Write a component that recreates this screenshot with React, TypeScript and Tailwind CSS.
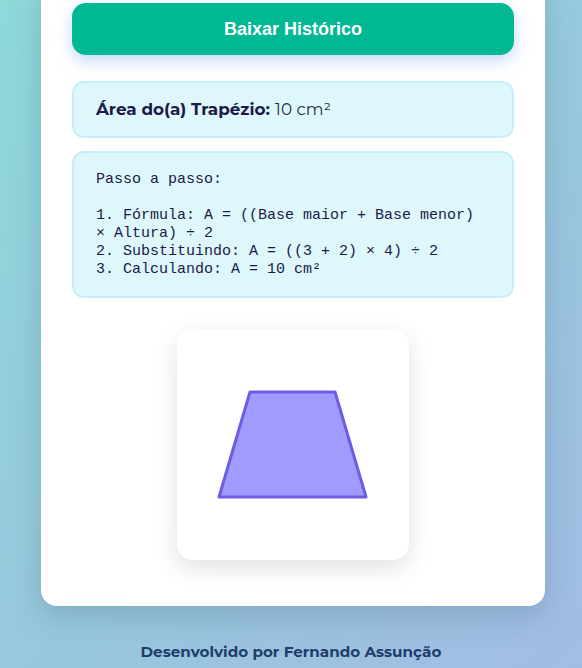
export default function App() {
  const steps = [
    "Passo a passo:",
    "",
    "1. Fórmula: A = ((Base maior + Base menor) × Altura) ÷ 2",
    "2. Substituindo: A = ((3 + 2) × 4) ÷ 2",
    "3. Calculando: A = 10 cm²",
  ].join("\n");

  return (
    <div className="h-[668px] overflow-hidden bg-[linear-gradient(135deg,#8ed9da_0%,#98c6dd_60%,#a3bce4_100%)] font-['Montserrat','Open_Sans',sans-serif]">
      <div className="ml-[41px] -mt-[20px] w-[504px] rounded-2xl bg-white px-[31px] pt-[23px] pb-[46px] shadow-[0_10px_30px_rgba(60,90,120,0.25)]">
        {/* Download */}
        <button
          type="button"
          className="h-[52px] w-full rounded-[14px] bg-[#00b894] font-['Liberation_Sans',sans-serif] text-[18px] font-bold text-white shadow-[0_6px_16px_rgba(90,150,240,0.35)]"
        >
          Baixar Histórico
        </button>

        {/* Result */}
        <div className="mt-[26px] flex h-[57px] items-center rounded-xl border-2 border-[#c4effa] bg-[#def7fa] px-[22px] text-[16.8px] text-[#1c1a4a]">
          <span className="font-bold">Área do(a) Trapézio:</span>
          <span className="ml-[5px] font-normal text-[#2d2d45]">10 cm²</span>
        </div>

        {/* Steps */}
        <div className="mt-[13px] rounded-xl border-2 border-[#c4effa] bg-[#def7fa] px-[22px] pt-[18px] pb-[17px]">
          <pre className="whitespace-pre-wrap font-['Liberation_Mono',monospace] text-[15px] leading-[18px] text-[#1c1a4a]">
            {steps}
          </pre>
        </div>

        {/* Shape */}
        <div className="mt-[31px] flex justify-center">
          <div className="flex h-[231px] w-[232px] items-center justify-center rounded-2xl bg-white shadow-[0_8px_24px_rgba(0,0,0,0.12)]">
            <svg width="232" height="231" viewBox="0 0 232 231">
              <polygon
                points="42,168 73,63 158,63 189,168"
                fill="#a29bfe"
                stroke="#6c5ce7"
                strokeWidth="3"
                strokeLinejoin="round"
              />
            </svg>
          </div>
        </div>
      </div>

      <p className="mt-[35px] text-center text-[15.2px] font-bold text-[#1d3d6b]">
        Desenvolvido por Fernando Assunção
      </p>
    </div>
  );
}
